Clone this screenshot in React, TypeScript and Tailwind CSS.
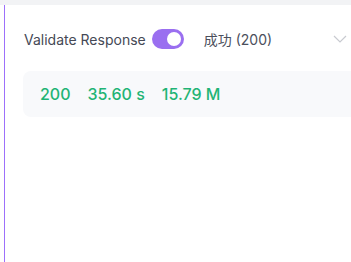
import React from "react";

export default function App() {
  return (
    <div className="w-[351px] h-[262px] bg-white overflow-hidden flex flex-col" style={{ fontFamily: "Inter, 'Noto Sans CJK SC', sans-serif" }}>
      <div className="h-[5px] bg-[#f2f3f5] shrink-0" />
      <div className="flex-1 ml-[4px] border-l border-[#9d70fb] pl-[18px] pt-[24px]">
        <div className="flex items-center h-[20px] w-[360px]">
          <span className="text-[14px] text-[#454955] pl-[1px]">Validate Response</span>
          <div className="ml-[6px] w-[32px] h-[20px] rounded-full bg-[#9a6ff0] flex items-center justify-end pr-[3px] shrink-0">
            <div className="w-[14px] h-[14px] rounded-full bg-white" />
          </div>
          <div className="ml-[20px] flex-1 flex items-center justify-between">
            <span className="text-[14px] text-[#4b4f5c]">成功 (200)</span>
            <svg width="14" height="8" viewBox="0 0 14 8" fill="none" className="mr-[36px]">
              <path d="M1 1l6 6 6-6" stroke="#c8cad0" strokeWidth="1.2" />
            </svg>
          </div>
        </div>
        <div className="mt-[22px] h-[46px] w-[360px] rounded-[8px] bg-[#f8f9fb] flex items-center pl-[17px] gap-[17px] text-[16px] font-medium text-[#1fb475]">
          <span>200</span>
          <span>35.60 s</span>
          <span>15.79 M</span>
        </div>
      </div>
    </div>
  );
}
